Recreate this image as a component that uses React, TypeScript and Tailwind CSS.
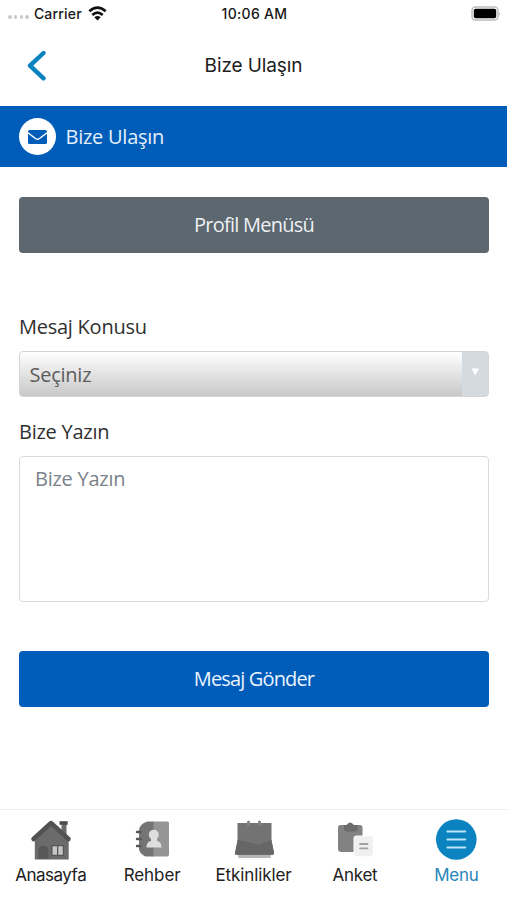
import type { ReactNode } from "react";

const HomeIcon = () => (
  <svg width="42" height="42" viewBox="0 0 42 42">
    <path d="M31.500 4h5v14l-5-5z" fill="#6a6a6a" />
    <path d="M29.500 2.200h8.200v3.600h-8.200z" fill="#4c4c4c" />
    <path d="M4.800 19.500 21 5.500l17.700 14v21H4.800z" fill="#6b6b6b" />
    <path d="M3.500 20 21 4l17.500 16" fill="none" stroke="#525252" strokeWidth="4.500" strokeLinecap="round" strokeLinejoin="round" />
    <path d="M8.500 39.500V31c0-5.500 10-5.500 10 0v8.500z" fill="#575757" />
    <path d="M21 26h13v11H21z" fill="#565656" />
    <path d="M22.500 27.300h4.500v8.500h-4.500zM28.300 27.300h4.500v8.500h-4.500z" fill="#c6c6c6" />
  </svg>
);

const ContactsIcon = () => (
  <svg width="42" height="42" viewBox="0 0 42 42">
    <path d="M23 2.500h-6.500Q8 5 8 12v18.500q1.500 5 6.500 7H23z" fill="#747474" />
    <path d="M22.500 2.500h14Q38 2.500 38 4v31.500q0 2-2 2H22.500z" fill="#959595" />
    <path d="M6 13h3.500M6 20h3.500M6 27h3.500" stroke="#555" strokeWidth="2.400" strokeLinecap="round" />
    <circle cx="22.800" cy="15.800" r="5" fill="#dedede" />
    <path d="M20 19h6v3c3 .8 4.500 2.500 4.500 6.500h-15c0-4 1.500-5.700 4.500-6.500z" fill="#dedede" />
  </svg>
);

const EventsIcon = () => (
  <svg width="42" height="42" viewBox="0 0 42 42">
    <path d="M5 35h33l-.5 4h-32z" fill="#b5b5b5" />
    <path d="M4.500 4h34v18l2.500 12q.2 1.800-1.500 1.800h-36Q1.700 35.800 2 34l2.500-10z" fill="#737373" />
    <path d="m4.500 21 22 4.500L38.500 21 41 34q.2 1.800-1.500 1.800h-36Q1.700 35.800 2 34z" fill="#666" />
    <path d="M15.500 5.500V3M26.500 5.500V3" stroke="#858585" strokeWidth="3" strokeLinecap="round" />
  </svg>
);

const SurveyIcon = () => (
  <svg width="42" height="42" viewBox="0 0 42 42">
    <path d="M6.500 6h19.500q2.500 0 2.500 2.500V33H7.500Q4 33 4 29.500V8.500Q4 6 6.500 6z" fill="#828282" />
    <path d="M10 6h2.500q3.500-5 7.500 0h3.500v3.500q0 3-3 3h-7.500q-3 0-3-3z" fill="#6b6b6b" />
    <rect x="19.500" y="16.500" width="20" height="21.500" rx="3" fill="#fff" />
    <rect x="20.300" y="17.300" width="18.500" height="20" rx="2.500" fill="#f0f0f0" />
    <path d="M26 25h7.500M26 29.300h7.500" stroke="#a0a0a0" strokeWidth="1.800" strokeLinecap="round" />
  </svg>
);

const MenuIcon = () => (
  <svg width="42" height="42" viewBox="0 0 42 42">
    <circle cx="21.300" cy="20.500" r="20.300" fill="#0b83c0" />
    <path d="M12.300 12.500h18M12.300 20.500h18M12.300 28.500h18" stroke="#bfe5f8" strokeWidth="1.900" strokeLinecap="round" />
  </svg>
);

const NavItem = ({ label, className, children }: { label: string; className: string; children: ReactNode }) => (
  <a className="flex flex-1 flex-col items-center">
    {children}
    <span className={`mt-[3px] text-[17px] leading-[22px] ${className}`}>{label}</span>
  </a>
);

const App = () => {
  return (
    <div className="flex h-[900px] w-[507px] flex-col overflow-hidden bg-white font-['Open_Sans',sans-serif]">
      <div className="grid h-[26px] grid-cols-3 items-center pr-[6px] pl-2 font-['Inter',sans-serif] text-[14px] font-medium tracking-[0.2px] text-[#181818]">
        <div className="flex items-center">
          <div className="mt-[8px] mr-[5px] flex gap-[2.300px]">
            <span className="size-[3.500px] rounded-full bg-[#c9c9c9]" />
            <span className="size-[3.500px] rounded-full bg-[#c9c9c9]" />
            <span className="size-[3.500px] rounded-full bg-[#c9c9c9]" />
            <span className="size-[3.500px] rounded-full bg-[#c9c9c9]" />
          </div>
          <span>Carrier</span>
          <svg className="ml-[6px]" width="19" height="15" viewBox="0 0 19 15">
            <path d="M1.300 5.300q8.200-7.300 16.400 0M4.300 8.900q5.200-4.500 10.400 0" fill="none" stroke="#111" strokeWidth="2.700" />
            <path d="m9.500 14.500-3.200-3.200q3.200-2.800 6.400 0z" fill="#111" />
          </svg>
        </div>
        <span className="text-center tracking-[0.3px]">10:06 AM</span>
        <svg className="justify-self-end" width="30" height="15" viewBox="0 0 30 15">
          <rect x="1" y="1" width="26" height="13" rx="3.500" fill="#fff" stroke="#bdbdbd" strokeWidth="1.500" />
          <rect x="2.800" y="2.800" width="22.400" height="9.400" rx="1.800" fill="#000" />
          <path d="M28.300 5.500q1.500 2 0 4z" fill="#aaa" />
        </svg>
      </div>

      <header className="grid h-[80px] grid-cols-3 items-center px-[26px] font-['Inter',sans-serif]">
        <svg width="22" height="32" viewBox="0 0 22 32">
          <path d="M17.500 3 4 15.700l13.500 12.600" fill="none" stroke="#0b83c0" strokeWidth="4.400" strokeLinecap="round" strokeLinejoin="round" />
        </svg>
        <h1 className="text-center text-[19px] tracking-[-0.1px] whitespace-nowrap text-[#202020]">Bize Ulaşın</h1>
      </header>

      <section className="flex h-[61px] items-center bg-[#005cb9] pl-[19px]">
        <div className="flex size-[37px] items-center justify-center rounded-full bg-white">
          <svg width="19" height="14" viewBox="0 0 19 14">
            <rect width="19" height="14" rx="1.500" fill="#005cb9" />
            <path d="m0 2.800 7.500 5.700q2 1.400 4 0L19 2.800" fill="none" stroke="#fff" strokeWidth="1.400" />
          </svg>
        </div>
        <span className="ml-[9.500px] text-[20px] tracking-[-0.25px] text-[#e6f1fb]">Bize Ulaşın</span>
      </section>

      <main className="flex flex-1 flex-col pt-[30px] pr-[18px] pl-[19px]">
        <button className="h-[56px] rounded-[4px] bg-[#5c6770] text-[20px] tracking-[-0.75px] text-[#eef1f4]">Profil Menüsü</button>

        <label className="mt-[60px] text-[20px] leading-[28px] tracking-[-0.25px] text-[#303030]">Mesaj Konusu</label>
        <div className="mt-[10px] flex h-[46px] overflow-hidden rounded-[4px] border border-[#d2d4d6] bg-gradient-to-b from-white to-[#c8c8c8]">
          <span className="flex flex-1 items-center pt-px pl-[9.500px] text-[20px] tracking-[-0.25px] text-[#5c5c5c]">Seçiniz</span>
          <span className="flex w-[26px] justify-center bg-[#d3dae0] pt-[16px]">
            <svg width="9" height="8" viewBox="0 0 9 8">
              <path d="M.5.5h7.500l-3.700 7z" fill="#fff" />
            </svg>
          </span>
        </div>

        <label className="mt-[21px] text-[20px] leading-[28px] tracking-[-0.25px] text-[#303030]">Bize Yazın</label>
        <textarea
          className="mt-[10px] h-[146px] resize-none rounded-[4px] border border-[#d8dadc] px-[15px] py-[8px] text-[20px] leading-[28px] tracking-[-0.25px] placeholder:text-[#7b828a]"
          placeholder="Bize Yazın"
        />

        <button className="mt-[49px] h-[56px] rounded-[4px] bg-[#005cb9] text-[20px] tracking-[-0.85px] text-[#eaf4ff]">Mesaj Gönder</button>
      </main>

      <nav className="flex h-[91px] border-t border-[#ececec] bg-white pt-[9px] font-['Inter',sans-serif]">
        <NavItem label="Anasayfa" className="tracking-[-0.5px] text-[#202020]">
          <HomeIcon />
        </NavItem>
        <NavItem label="Rehber" className="tracking-[-0.1px] text-[#202020]">
          <ContactsIcon />
        </NavItem>
        <NavItem label="Etkinlikler" className="tracking-[-0.1px] text-[#202020]">
          <EventsIcon />
        </NavItem>
        <NavItem label="Anket" className="tracking-[-0.3px] text-[#202020]">
          <SurveyIcon />
        </NavItem>
        <NavItem label="Menu" className="tracking-[-0.3px] text-[#2785b9]">
          <MenuIcon />
        </NavItem>
      </nav>
    </div>
  );
};

export default App;
